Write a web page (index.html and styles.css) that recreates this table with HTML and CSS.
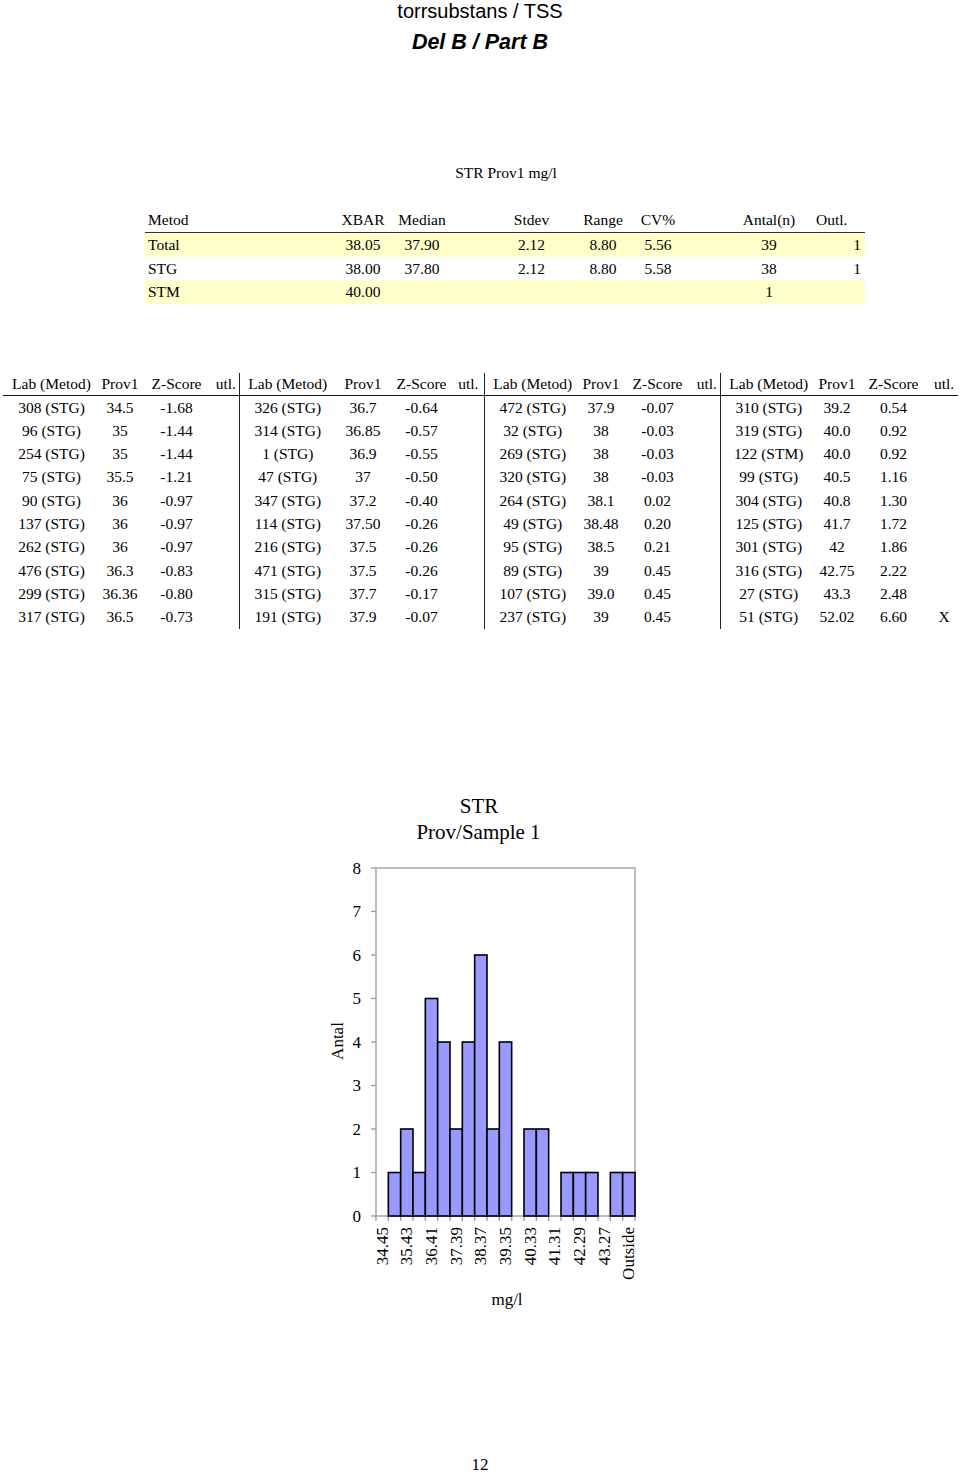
FILE: index.html
```html
<!DOCTYPE html>
<html lang="sv">
<head>
<meta charset="utf-8">
<title>torrsubstans / TSS</title>
<link rel="stylesheet" href="styles.css">
</head>
<body>
<div class="page">
  <h1 class="title">torrsubstans / TSS</h1>
  <h2 class="subtitle">Del B / Part B</h2>

  <p class="caption">STR Prov1 mg/l</p>

  <table class="summary">
    <colgroup>
      <col class="w-metod"><col class="w-xbar"><col class="w-median"><col class="w-stdev">
      <col class="w-range"><col class="w-cv"><col class="w-antal"><col class="w-outl">
    </colgroup>
    <thead>
      <tr>
        <th class="c-metod">Metod</th><th>XBAR</th><th>Median</th><th class="c-stdev">Stdev</th>
        <th>Range</th><th>CV%</th><th class="c-antal">Antal(n)</th><th class="c-outl-h">Outl.</th>
      </tr>
    </thead>
    <tbody>
      <tr class="hl">
        <td class="c-metod">Total</td><td>38.05</td><td>37.90</td><td class="c-stdev">2.12</td>
        <td>8.80</td><td>5.56</td><td class="c-antal">39</td><td class="c-outl">1</td>
      </tr>
      <tr>
        <td class="c-metod">STG</td><td>38.00</td><td>37.80</td><td class="c-stdev">2.12</td>
        <td>8.80</td><td>5.58</td><td class="c-antal">38</td><td class="c-outl">1</td>
      </tr>
      <tr class="hl">
        <td class="c-metod">STM</td><td>40.00</td><td></td><td class="c-stdev"></td>
        <td></td><td></td><td class="c-antal">1</td><td class="c-outl"></td>
      </tr>
    </tbody>
  </table>

  <table class="results">
    <colgroup>
      <col class="g-lab"><col class="g-prov"><col class="g-z"><col class="g-utl">
      <col class="g-lab"><col class="g2-prov"><col class="g2-z"><col class="g2-utl">
      <col class="g-lab"><col class="g-prov"><col class="g-z"><col class="g-utl">
      <col class="g-lab"><col class="g-prov"><col class="g-z"><col class="g4-utl">
    </colgroup>
    <thead>
      <tr>
        <th>Lab (Metod)</th><th>Prov1</th><th>Z-Score</th><th>utl.</th>
        <th class="gs">Lab (Metod)</th><th>Prov1</th><th>Z-Score</th><th>utl.</th>
        <th class="gs">Lab (Metod)</th><th>Prov1</th><th>Z-Score</th><th>utl.</th>
        <th class="gs">Lab (Metod)</th><th>Prov1</th><th>Z-Score</th><th>utl.</th>
      </tr>
    </thead>
    <tbody>
      <tr><td>308 (STG)</td><td>34.5</td><td>-1.68</td><td></td><td class="gs">326 (STG)</td><td>36.7</td><td>-0.64</td><td></td><td class="gs">472 (STG)</td><td>37.9</td><td>-0.07</td><td></td><td class="gs">310 (STG)</td><td>39.2</td><td>0.54</td><td></td></tr>
      <tr><td>96 (STG)</td><td>35</td><td>-1.44</td><td></td><td class="gs">314 (STG)</td><td>36.85</td><td>-0.57</td><td></td><td class="gs">32 (STG)</td><td>38</td><td>-0.03</td><td></td><td class="gs">319 (STG)</td><td>40.0</td><td>0.92</td><td></td></tr>
      <tr><td>254 (STG)</td><td>35</td><td>-1.44</td><td></td><td class="gs">1 (STG)</td><td>36.9</td><td>-0.55</td><td></td><td class="gs">269 (STG)</td><td>38</td><td>-0.03</td><td></td><td class="gs">122 (STM)</td><td>40.0</td><td>0.92</td><td></td></tr>
      <tr><td>75 (STG)</td><td>35.5</td><td>-1.21</td><td></td><td class="gs">47 (STG)</td><td>37</td><td>-0.50</td><td></td><td class="gs">320 (STG)</td><td>38</td><td>-0.03</td><td></td><td class="gs">99 (STG)</td><td>40.5</td><td>1.16</td><td></td></tr>
      <tr><td>90 (STG)</td><td>36</td><td>-0.97</td><td></td><td class="gs">347 (STG)</td><td>37.2</td><td>-0.40</td><td></td><td class="gs">264 (STG)</td><td>38.1</td><td>0.02</td><td></td><td class="gs">304 (STG)</td><td>40.8</td><td>1.30</td><td></td></tr>
      <tr><td>137 (STG)</td><td>36</td><td>-0.97</td><td></td><td class="gs">114 (STG)</td><td>37.50</td><td>-0.26</td><td></td><td class="gs">49 (STG)</td><td>38.48</td><td>0.20</td><td></td><td class="gs">125 (STG)</td><td>41.7</td><td>1.72</td><td></td></tr>
      <tr><td>262 (STG)</td><td>36</td><td>-0.97</td><td></td><td class="gs">216 (STG)</td><td>37.5</td><td>-0.26</td><td></td><td class="gs">95 (STG)</td><td>38.5</td><td>0.21</td><td></td><td class="gs">301 (STG)</td><td>42</td><td>1.86</td><td></td></tr>
      <tr><td>476 (STG)</td><td>36.3</td><td>-0.83</td><td></td><td class="gs">471 (STG)</td><td>37.5</td><td>-0.26</td><td></td><td class="gs">89 (STG)</td><td>39</td><td>0.45</td><td></td><td class="gs">316 (STG)</td><td>42.75</td><td>2.22</td><td></td></tr>
      <tr><td>299 (STG)</td><td>36.36</td><td>-0.80</td><td></td><td class="gs">315 (STG)</td><td>37.7</td><td>-0.17</td><td></td><td class="gs">107 (STG)</td><td>39.0</td><td>0.45</td><td></td><td class="gs">27 (STG)</td><td>43.3</td><td>2.48</td><td></td></tr>
      <tr><td>317 (STG)</td><td>36.5</td><td>-0.73</td><td></td><td class="gs">191 (STG)</td><td>37.9</td><td>-0.07</td><td></td><td class="gs">237 (STG)</td><td>39</td><td>0.45</td><td></td><td class="gs">51 (STG)</td><td>52.02</td><td>6.60</td><td>X</td></tr>
    </tbody>
  </table>

  <svg class="chart" width="340" height="520" viewBox="0 0 340 520" xmlns="http://www.w3.org/2000/svg">
    <text class="ctitle" x="169" y="15">STR</text>
    <text class="ctitle" x="168.5" y="41">Prov/Sample 1</text>

    <rect x="66" y="77" width="259" height="348" fill="#fff" stroke="#999" stroke-width="1.3"/>

    <g stroke="#999" stroke-width="1.3">
      <line x1="61" y1="425" x2="66" y2="425"/>
      <line x1="61" y1="381.5" x2="66" y2="381.5"/>
      <line x1="61" y1="338" x2="66" y2="338"/>
      <line x1="61" y1="294.5" x2="66" y2="294.5"/>
      <line x1="61" y1="251" x2="66" y2="251"/>
      <line x1="61" y1="207.5" x2="66" y2="207.5"/>
      <line x1="61" y1="164" x2="66" y2="164"/>
      <line x1="61" y1="120.5" x2="66" y2="120.5"/>
      <line x1="61" y1="77" x2="66" y2="77"/>

      <line x1="66" y1="425" x2="66" y2="430"/>
      <line x1="78.33" y1="425" x2="78.33" y2="430"/>
      <line x1="90.67" y1="425" x2="90.67" y2="430"/>
      <line x1="103" y1="425" x2="103" y2="430"/>
      <line x1="115.33" y1="425" x2="115.33" y2="430"/>
      <line x1="127.67" y1="425" x2="127.67" y2="430"/>
      <line x1="140" y1="425" x2="140" y2="430"/>
      <line x1="152.33" y1="425" x2="152.33" y2="430"/>
      <line x1="164.67" y1="425" x2="164.67" y2="430"/>
      <line x1="177" y1="425" x2="177" y2="430"/>
      <line x1="189.33" y1="425" x2="189.33" y2="430"/>
      <line x1="201.67" y1="425" x2="201.67" y2="430"/>
      <line x1="214" y1="425" x2="214" y2="430"/>
      <line x1="226.33" y1="425" x2="226.33" y2="430"/>
      <line x1="238.67" y1="425" x2="238.67" y2="430"/>
      <line x1="251" y1="425" x2="251" y2="430"/>
      <line x1="263.33" y1="425" x2="263.33" y2="430"/>
      <line x1="275.67" y1="425" x2="275.67" y2="430"/>
      <line x1="288" y1="425" x2="288" y2="430"/>
      <line x1="300.33" y1="425" x2="300.33" y2="430"/>
      <line x1="312.67" y1="425" x2="312.67" y2="430"/>
      <line x1="325" y1="425" x2="325" y2="430"/>
    </g>

    <g class="bars" fill="#9999ff" stroke="#000" stroke-width="1.6">
      <rect x="78.33" y="381.5" width="12.33" height="43.5"/>
      <rect x="90.67" y="338" width="12.33" height="87"/>
      <rect x="103" y="381.5" width="12.33" height="43.5"/>
      <rect x="115.33" y="207.5" width="12.33" height="217.5"/>
      <rect x="127.67" y="251" width="12.33" height="174"/>
      <rect x="140" y="338" width="12.33" height="87"/>
      <rect x="152.33" y="251" width="12.33" height="174"/>
      <rect x="164.67" y="164" width="12.33" height="261"/>
      <rect x="177" y="338" width="12.33" height="87"/>
      <rect x="189.33" y="251" width="12.33" height="174"/>
      <rect x="214" y="338" width="12.33" height="87"/>
      <rect x="226.33" y="338" width="12.33" height="87"/>
      <rect x="251" y="381.5" width="12.33" height="43.5"/>
      <rect x="263.33" y="381.5" width="12.33" height="43.5"/>
      <rect x="275.67" y="381.5" width="12.33" height="43.5"/>
      <rect x="300.33" y="381.5" width="12.33" height="43.5"/>
      <rect x="312.67" y="381.5" width="12.33" height="43.5"/>
    </g>

    <g class="ylab">
      <text x="51" y="425">0</text>
      <text x="51" y="381.5">1</text>
      <text x="51" y="338">2</text>
      <text x="51" y="294.5">3</text>
      <text x="51" y="251">4</text>
      <text x="51" y="207.5">5</text>
      <text x="51" y="164">6</text>
      <text x="51" y="120.5">7</text>
      <text x="51" y="77">8</text>
    </g>

    <g class="xlab">
      <text transform="translate(72.17 436) rotate(-90)">34.45</text>
      <text transform="translate(96.83 436) rotate(-90)">35.43</text>
      <text transform="translate(121.5 436) rotate(-90)">36.41</text>
      <text transform="translate(146.17 436) rotate(-90)">37.39</text>
      <text transform="translate(170.83 436) rotate(-90)">38.37</text>
      <text transform="translate(195.5 436) rotate(-90)">39.35</text>
      <text transform="translate(220.17 436) rotate(-90)">40.33</text>
      <text transform="translate(244.83 436) rotate(-90)">41.31</text>
      <text transform="translate(269.5 436) rotate(-90)">42.29</text>
      <text transform="translate(294.17 436) rotate(-90)">43.27</text>
      <text transform="translate(318.83 436) rotate(-90)">Outside</text>
    </g>

    <text class="axtitle" transform="translate(27 250) rotate(-90)">Antal</text>
    <text class="axtitle" x="197" y="508">mg/l</text>
  </svg>

  <p class="pagenum">12</p>
</div>
</body>
</html>
```

FILE: styles.css
```css
html, body {
  margin: 0;
  padding: 0;
  background: #fff;
  color: #000;
}

.page {
  width: 960px;
  height: 1474px;
  overflow: hidden;
  font-family: "Liberation Serif", "Times New Roman", serif;
}

.title {
  margin: 0;
  font-family: "Liberation Sans", Arial, sans-serif;
  font-weight: normal;
  font-size: 20px;
  line-height: 22px;
  text-align: center;
}

.subtitle {
  margin: 8px 0 0;
  font-family: "Liberation Sans", Arial, sans-serif;
  font-weight: bold;
  font-style: italic;
  font-size: 21.5px;
  line-height: 24px;
  text-align: center;
}

.caption {
  margin: 109px 0 0 52px;
  font-size: 15.5px;
  line-height: 20px;
  text-align: center;
}

/* ---------- summary table ---------- */
.summary {
  margin: 25px 0 0 145px;
  width: 720px;
  table-layout: fixed;
  border-collapse: collapse;
  border-spacing: 0;
  font-size: 15.5px;
}

.summary .w-metod { width: 186px; }
.summary .w-xbar { width: 64px; }
.summary .w-median { width: 54px; }
.summary .w-stdev { width: 119px; }
.summary .w-range { width: 70px; }
.summary .w-cv { width: 40px; }
.summary .w-antal { width: 122px; }
.summary .w-outl { width: 65px; }

.summary th,
.summary td {
  padding: 0;
  font-weight: normal;
  text-align: center;
  white-space: nowrap;
  vertical-align: middle;
}

.summary th {
  height: 24px;
  line-height: 22px;
  border-bottom: 1px solid #333;
}

.summary td {
  height: 23.5px;
  line-height: 23.5px;
}

.summary .hl td {
  background: #ffffcc;
}

.summary .c-metod {
  text-align: left;
  padding-left: 3px;
}

.summary .c-stdev { padding-left: 46px; }
.summary .c-antal { padding-left: 60px; }

.summary .c-outl-h {
  text-align: left;
  padding-left: 16px;
}

.summary .c-outl {
  text-align: right;
  padding-right: 4px;
}

/* ---------- results table ---------- */
.results {
  margin: 69px 0 0 3px;
  width: 955px;
  table-layout: fixed;
  border-collapse: collapse;
  border-spacing: 0;
  font-size: 15.5px;
}

.results .g-lab { width: 97px; }
.results .g-prov { width: 40px; }
.results .g-z { width: 73px; }
.results .g-utl { width: 26px; }
.results .g2-prov { width: 54px; }
.results .g2-z { width: 63px; }
.results .g2-utl { width: 31px; }
.results .g4-utl { width: 28px; }

.results th,
.results td {
  padding: 0;
  font-weight: normal;
  text-align: center;
  white-space: nowrap;
  vertical-align: middle;
}

.results th {
  height: 22px;
  line-height: 22px;
  border-bottom: 1px solid #111;
}

.results td {
  height: 23.33px;
  line-height: 23.33px;
}

.results .gs {
  border-left: 1px solid #222;
}

/* ---------- chart ---------- */
.chart {
  display: block;
  margin: 162px 0 0 310px;
  font-family: "Liberation Serif", "Times New Roman", serif;
}

.chart .ctitle {
  font-size: 21px;
  text-anchor: middle;
  dominant-baseline: central;
}

.chart .ylab text {
  font-size: 17px;
  text-anchor: end;
  dominant-baseline: central;
}

.chart .xlab text {
  font-size: 17px;
  text-anchor: end;
  dominant-baseline: central;
}

.chart .axtitle {
  font-size: 17px;
  text-anchor: middle;
  dominant-baseline: central;
}

.pagenum {
  margin: 144px 0 0;
  font-size: 17px;
  line-height: 20px;
  text-align: center;
}
```
